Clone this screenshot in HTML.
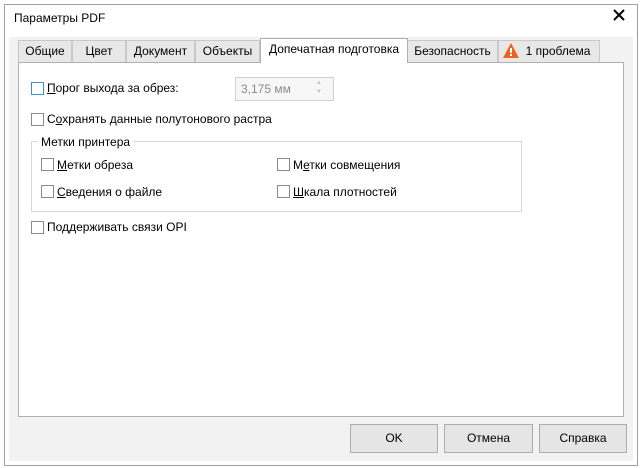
<!DOCTYPE html>
<html><head><meta charset="utf-8"><style>
*{margin:0;padding:0;box-sizing:border-box}
body{width:642px;height:468px;background:#fff;position:relative;overflow:hidden;font-family:"Liberation Sans","DejaVu Sans",sans-serif;font-size:12px;color:#000}
.a{position:absolute}
.dlg{left:4px;top:4px;width:634px;height:462px;border:1px solid #a0a0a0;background:#fff}
.panel{left:9px;top:37px;width:624px;height:424px;background:#f2f2f2}
.tab{position:absolute;top:40px;height:22px;border:1px solid #c8c8c8;border-bottom:none;background:#e8e8e8;text-align:center;line-height:20px;white-space:nowrap}
.tab.act{top:38px;height:25px;background:#fff;border-color:#b0b0b0;z-index:2}
.content{left:18px;top:62px;width:606px;height:355px;background:#fff;border:1px solid #b0b0b0}
.cb{position:absolute;width:13px;height:13px;border:1px solid #8a8a8a;background:#fff}
.lbl{position:absolute;white-space:nowrap;line-height:14px}
u{text-decoration:underline}
.btn{position:absolute;top:424px;height:29px;border:1px solid #adadad;background:#e5e5e5;text-align:center;line-height:27px}
</style></head><body>
<div class="a dlg"></div>
<div class="lbl" style="left:14px;top:11px">Параметры PDF</div>
<svg class="a" style="left:613px;top:9px" width="12" height="12" viewBox="0 0 12 12"><path d="M1 1L11 11M11 1L1 11" stroke="#000" stroke-width="2"/></svg>
<div class="a panel"></div>
<div class="tab" style="left:18px;width:54px">Общие</div>
<div class="tab" style="left:72px;width:54px">Цвет</div>
<div class="tab" style="left:126px;width:69px">Документ</div>
<div class="tab" style="left:195px;width:65px">Объекты</div>
<div class="tab act" style="left:260px;width:148px">Допечатная подготовка</div>
<div class="tab" style="left:407px;width:91px">Безопасность</div>
<div class="tab" style="left:498px;width:102px;text-align:left;padding-left:4px"><svg width="16" height="15" viewBox="0 0 16 15" style="vertical-align:-3px"><path d="M8 0L16 15H0Z" fill="#f06020"/><rect x="7" y="5" width="2" height="5" fill="#fff"/><rect x="7" y="11" width="2" height="2" fill="#fff"/></svg>&nbsp; 1 проблема</div>
<div class="a content"></div>
<div class="cb" style="left:31px;top:82px;border-color:#3c8fc8"></div>
<div class="lbl" style="left:47px;top:81px"><u>П</u>орог выхода за обрез:</div>
<div class="a" style="left:235px;top:77px;width:99px;height:24px;border:1px solid #d0d0d0;background:#f7f7f7;color:#8a8a8a;padding:4px 0 0 5px">3,175 мм</div>
<div class="a" style="left:316px;top:79px;color:#c0c0c0;font-size:6px;line-height:9px">▲<br>▼</div>
<div class="cb" style="left:31px;top:113px"></div>
<div class="lbl" style="left:47px;top:112px">С<u>о</u>хранять данные полутонового растра</div>
<div class="a" style="left:31px;top:141px;width:491px;height:71px;border:1px solid #d8d8d8"></div>
<div class="lbl" style="left:38px;top:135px;background:#fff;padding:0 3px">Метки принтера</div>
<div class="cb" style="left:41px;top:158px"></div>
<div class="lbl" style="left:57px;top:158px"><u>М</u>етки обреза</div>
<div class="cb" style="left:277px;top:158px"></div>
<div class="lbl" style="left:293px;top:158px">М<u>е</u>тки совмещения</div>
<div class="cb" style="left:41px;top:185px"></div>
<div class="lbl" style="left:57px;top:185px"><u>С</u>ведения о файле</div>
<div class="cb" style="left:277px;top:185px"></div>
<div class="lbl" style="left:293px;top:185px"><u>Ш</u>кала плотностей</div>
<div class="cb" style="left:31px;top:221px"></div>
<div class="lbl" style="left:47px;top:220px">По<u>д</u>держивать связи OPI</div>
<div class="btn" style="left:350px;width:88px">OK</div>
<div class="btn" style="left:444px;width:89px">Отмена</div>
<div class="btn" style="left:539px;width:88px">Справка</div>
</body></html>
